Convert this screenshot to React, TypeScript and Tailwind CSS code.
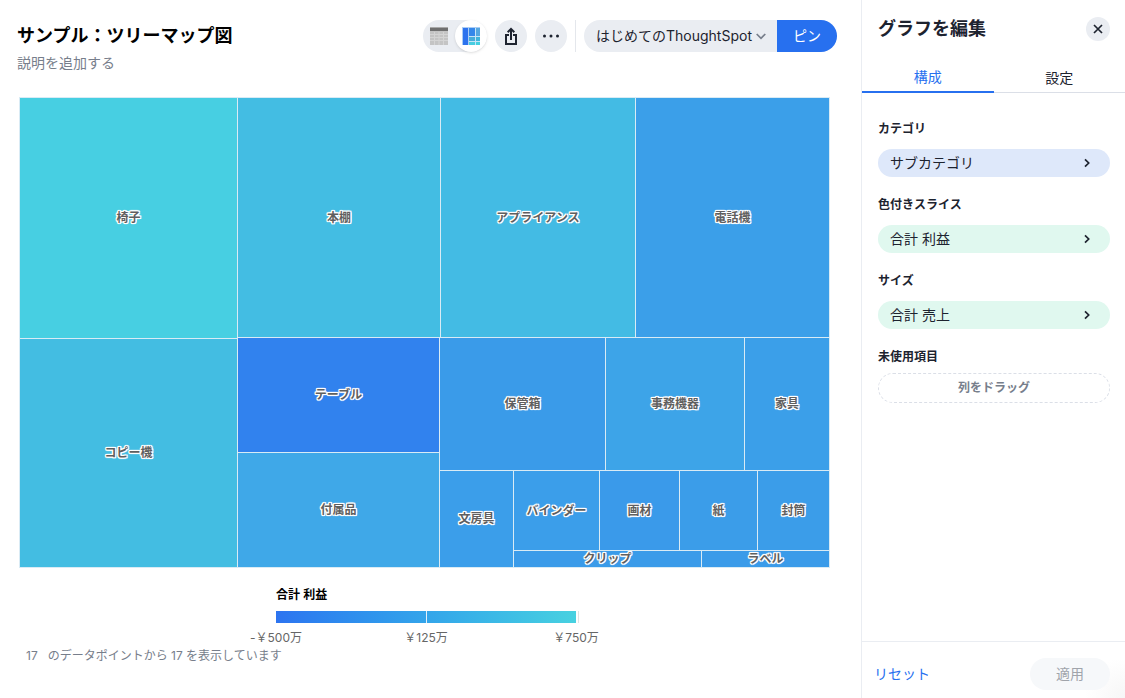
import React, { useState } from "react";

type Leaf = { kind: "leaf"; size: number; label: string; fill: string };
type Group = { kind: "row" | "col"; size: number; items: Node[] };
type Node = Leaf | Group;

const leaf = (size: number, label: string, fill: string): Leaf => ({ kind: "leaf", size, label, fill });
const row = (size: number, ...items: Node[]): Group => ({ kind: "row", size, items });
const col = (size: number, ...items: Node[]): Group => ({ kind: "col", size, items });

const tree = row(
  1,
  col(217, leaf(240, "椅子", "#47cfe2"), leaf(228, "コピー機", "#43bde2")),
  col(
    591,
    row(239, leaf(202, "本棚", "#43bde3"), leaf(194, "アプライアンス", "#43bbe4"), leaf(193, "電話機", "#3b9fe9")),
    row(
      229,
      col(201, leaf(114, "テーブル", "#3182ee"), leaf(114, "付属品", "#3fa8e8")),
      col(
        389,
        row(132, leaf(165, "保管箱", "#3a9be9"), leaf(138, "事務機器", "#3da4e8"), leaf(84, "家具", "#3b9fe9")),
        row(
          96,
          leaf(73, "文房具", "#3b9eea"),
          col(
            315,
            row(
              79,
              leaf(85, "バインダー", "#3b9eea"),
              leaf(79, "画材", "#3a9aea"),
              leaf(77, "紙", "#3b9de9"),
              leaf(71, "封筒", "#3b9de9"),
            ),
            row(16, leaf(187, "クリップ", "#3a9be9"), leaf(127, "ラベル", "#3a9be9")),
          ),
        ),
      ),
    ),
  ),
);

function TreeNode({ node }: { node: Node }) {
  if (node.kind === "leaf") {
    return (
      <div
        className="flex min-h-0 min-w-0 basis-0 items-center justify-center"
        style={{ flexGrow: node.size, backgroundColor: node.fill }}
      >
        <span className="text-xs leading-4 font-bold whitespace-nowrap text-[#5f5f5f] [text-shadow:1px_0_1px_#fff,-1px_0_1px_#fff,0_1px_1px_#fff,0_-1px_1px_#fff,1px_1px_0_#fff,-1px_-1px_0_#fff,1px_-1px_0_#fff,-1px_1px_0_#fff,0_0_2px_#fff,0_0_2px_#fff]">
          {node.label}
        </span>
      </div>
    );
  }
  return (
    <div
      className={
        node.kind === "row"
          ? "flex min-h-0 min-w-0 basis-0 flex-row gap-px"
          : "flex min-h-0 min-w-0 basis-0 flex-col gap-px"
      }
      style={{ flexGrow: node.size }}
    >
      {node.items.map((item, i) => (
        <TreeNode key={i} node={item} />
      ))}
    </div>
  );
}

function TableIcon() {
  return (
    <svg width="18" height="18" viewBox="0 0 18 18" aria-hidden="true">
      <rect width="18" height="18" fill="#c4c4c4" />
      <rect y="0" width="18" height="1" fill="#a9a9a9" />
      <rect y="1" width="18" height="3" fill="#707070" />
      <path d="M0 7.5h18M0 10.5h18M0 13.5h18M4.5 5v13M9 5v13M13.5 5v13" stroke="#d4d4d4" strokeWidth="1" />
    </svg>
  );
}

function TreemapIcon() {
  return (
    <svg width="18" height="18" viewBox="0 0 18 18" aria-hidden="true">
      <rect width="18" height="18" fill="#a9ccf5" />
      <rect x="1" y="1" width="5" height="17" fill="#2d73ee" />
      <rect x="7" y="1" width="6" height="8" fill="#3587ea" />
      <rect x="14" y="1" width="4" height="8" fill="#56a7df" />
      <path d="M7 9.5h11M7 14.5h11M13.5 1v17" stroke="#c6e4f6" />
      <rect x="7" y="10" width="6" height="4" fill="#48add9" />
      <rect x="14" y="10" width="4" height="4" fill="#3fb4db" />
      <rect x="7" y="15" width="6" height="3" fill="#49cde0" />
      <rect x="14" y="15" width="4" height="3" fill="#45d0e0" />
    </svg>
  );
}

function ShareIcon() {
  return (
    <svg width="14" height="18" viewBox="0 0 14 18" fill="none" stroke="#1d232f" strokeWidth="2" aria-hidden="true">
      <path d="M5 8H2v9h10V8H9" />
      <path d="M7 13V2M3.7 5.2L7 1.9l3.3 3.3" />
    </svg>
  );
}

function Chevron() {
  return (
    <svg width="6" height="10" viewBox="0 0 6 10" fill="none" stroke="#1d232f" strokeWidth="1.7" aria-hidden="true">
      <path d="M1 1.3L4.7 5 1 8.7" />
    </svg>
  );
}

function Field({ label, value, tone }: { label: string; value: string; tone: "blue" | "green" }) {
  return (
    <section className="mb-[18px]">
      <h3 className="mb-[10px] text-xs leading-5 font-bold">{label}</h3>
      <button
        type="button"
        className={
          tone === "blue"
            ? "flex h-7 w-full items-center justify-between rounded-full bg-[#dee8fa] pr-5 pl-3 text-sm"
            : "flex h-7 w-full items-center justify-between rounded-full bg-[#e0f8ef] pr-5 pl-3 text-sm"
        }
      >
        <span>{value}</span>
        <Chevron />
      </button>
    </section>
  );
}

export default function App() {
  const [view, setView] = useState("chart");
  const [tab, setTab] = useState("config");
  const tabOn = "flex-1 border-b-2 border-[#2770ef] text-sm text-[#2770ef]";
  const tabOff = "flex-1 border-b border-[#dbdfe7] text-sm";
  const viewOn = "flex size-8 items-center justify-center rounded-full bg-white shadow-sm";
  const viewOff = "flex size-8 items-center justify-center rounded-full";

  return (
    <div className="flex min-h-screen bg-white font-['Liberation_Sans','Noto_Sans_CJK_JP',sans-serif] text-[#1d232f]">
      <main className="flex min-w-0 flex-1 flex-col pt-5">
        <header className="flex items-start justify-between pr-6 pl-[17px]">
          <div>
            <h1 className="text-lg leading-8 font-bold text-black">サンプル：ツリーマップ図</h1>
            <button type="button" className="block text-sm leading-[22px] text-[#777e8b]">
              説明を追加する
            </button>
          </div>
          <div className="flex items-center gap-2">
            <div className="flex rounded-full bg-[#eaedf2]">
              <button type="button" aria-label="表" className={view === "table" ? viewOn : viewOff} onClick={() => setView("table")}>
                <TableIcon />
              </button>
              <button type="button" aria-label="グラフ" className={view === "chart" ? viewOn : viewOff} onClick={() => setView("chart")}>
                <TreemapIcon />
              </button>
            </div>
            <button type="button" aria-label="共有" className="flex size-8 items-center justify-center rounded-full bg-[#eaedf2]">
              <ShareIcon />
            </button>
            <button type="button" aria-label="その他" className="flex size-8 items-center justify-center rounded-full bg-[#eaedf2]">
              <svg width="18" height="4" viewBox="0 0 18 4" fill="#1d232f" aria-hidden="true">
                <circle cx="2.5" cy="2" r="1.5" />
                <circle cx="9" cy="2" r="1.5" />
                <circle cx="15.5" cy="2" r="1.5" />
              </svg>
            </button>
            <div className="h-8 w-px bg-[#e4e7ec]" />
            <div className="flex">
              <div className="relative">
                <select
                  aria-label="ピンボード"
                  className="h-8 w-[193px] appearance-none rounded-l-full bg-[#eaedf2] pl-3 font-['Inter','Noto_Sans_CJK_JP',sans-serif] text-sm"
                >
                  <option>はじめてのThoughtSpot</option>
                </select>
                <svg
                  className="pointer-events-none absolute top-3 right-[11px]"
                  width="10"
                  height="8"
                  viewBox="0 0 10 8"
                  fill="none"
                  stroke="#777e8b"
                  strokeWidth="1.7"
                  aria-hidden="true"
                >
                  <path d="M.7 2L5 6.3 9.3 2" />
                </svg>
              </div>
              <button type="button" className="h-8 w-[60px] rounded-r-full bg-[#2770ef] text-sm text-white">
                ピン
              </button>
            </div>
          </div>
        </header>

        <div className="mt-[23px] mr-[31px] ml-[19px] flex min-h-[300px] flex-1 bg-[#d9ebf5] p-px">
          <TreeNode node={tree} />
        </div>

        <div className="flex justify-center pt-[17px] pr-[9px]">
          <div className="w-[450px]">
            <div className="px-[72px]">
              <h2 className="px-[3px] text-xs leading-5 font-bold text-black">合計 利益</h2>
              <div className="mt-1.5 border-r border-[#e2e2e2] pr-0.5 pl-[3px]">
                <div className="flex h-3 justify-center bg-linear-to-r from-[#2d74f0] to-[#48d1e0]">
                  <div className="w-px bg-[#e4f1fa]" />
                </div>
              </div>
            </div>
            <div className="mt-[5px] flex text-center font-['Inter','Noto_Sans_CJK_JP',sans-serif] text-xs leading-5 text-[#666]">
              <span className="flex-1">-￥500万</span>
              <span className="flex-1">￥125万</span>
              <span className="flex-1">￥750万</span>
            </div>
          </div>
        </div>
        <p className="-mt-0.5 mb-8 pl-[26px] font-['Inter','Noto_Sans_CJK_JP',sans-serif] text-xs leading-5 text-[#777e8b]">
          17<span className="ml-[10px]">のデータポイントから 17 を表示しています</span>
        </p>
      </main>

      <aside className="flex w-66 shrink-0 flex-col border-l border-[#eaedf2]">
        <div className="flex items-center justify-between pt-[17px] pr-[15px] pl-4">
          <h2 className="text-lg leading-6 font-bold">グラフを編集</h2>
          <button type="button" aria-label="閉じる" className="flex size-6 items-center justify-center rounded-full bg-[#eaedf2]">
            <svg width="10" height="10" viewBox="0 0 10 10" stroke="#1d232f" strokeWidth="1.7" aria-hidden="true">
              <path d="M1 1l8 8M9 1L1 9" />
            </svg>
          </button>
        </div>
        <div role="tablist" className="mt-[22px] flex h-[30px]">
          <button type="button" role="tab" aria-selected={tab === "config"} className={tab === "config" ? tabOn : tabOff} onClick={() => setTab("config")}>
            構成
          </button>
          <button type="button" role="tab" aria-selected={tab === "settings"} className={tab === "settings" ? tabOn : tabOff} onClick={() => setTab("settings")}>
            設定
          </button>
        </div>
        <div className="flex-1 pt-[26px] pr-[15px] pl-4">
          <Field label="カテゴリ" value="サブカテゴリ" tone="blue" />
          <Field label="色付きスライス" value="合計 利益" tone="green" />
          <Field label="サイズ" value="合計 売上" tone="green" />
          <section>
            <h3 className="mb-1.5 text-xs leading-5 font-bold">未使用項目</h3>
            <div className="flex h-[30px] items-center justify-center rounded-full border border-dashed border-[#dbdfe7] text-xs font-bold text-[#777e8b]">
              列をドラッグ
            </div>
          </section>
        </div>
        <footer className="flex items-center justify-between border-t border-[#eaedf2] bg-[radial-gradient(circle_at_bottom_right,#f6f6f6,#fff_40px)] pt-4 pr-[15px] pb-2 pl-3">
          <button type="button" className="text-sm text-[#2770ef]">
            リセット
          </button>
          <button type="button" disabled className="h-8 w-20 rounded-full bg-[#f6f8fa] text-sm text-[#a0a4ab]">
            適用
          </button>
        </footer>
      </aside>
    </div>
  );
}
